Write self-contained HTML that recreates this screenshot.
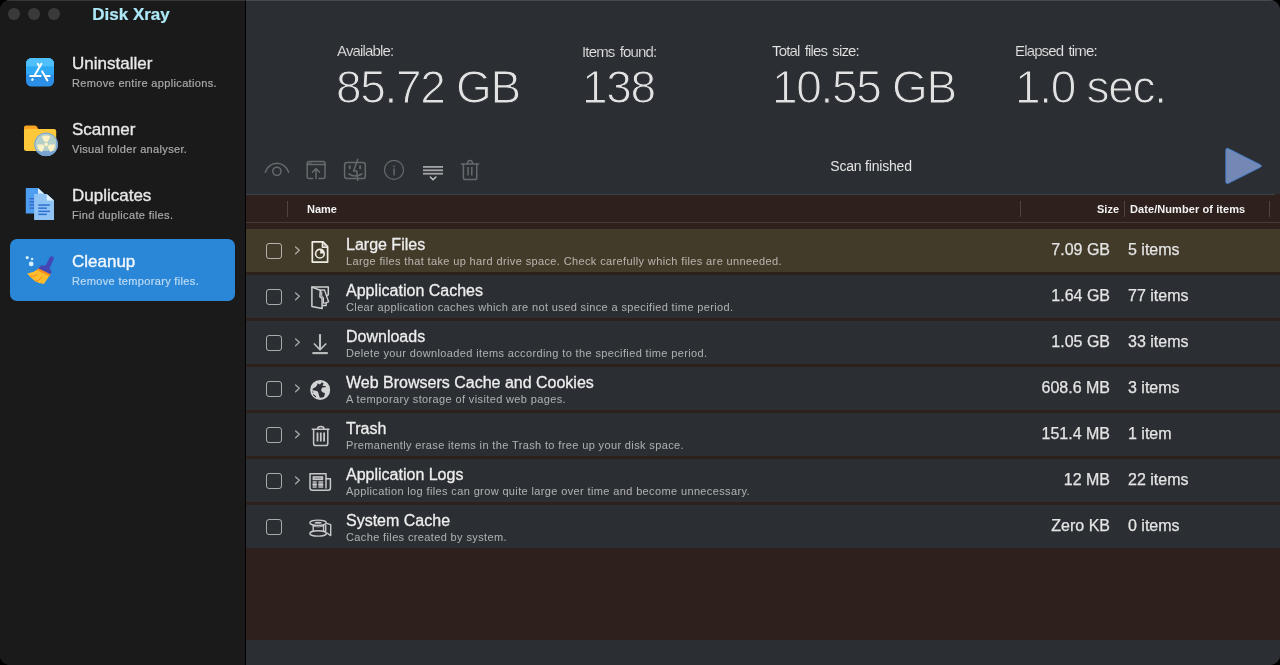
<!DOCTYPE html>
<html>
<head>
<meta charset="utf-8">
<title>Disk Xray</title>
<style>
*{box-sizing:border-box;margin:0;padding:0}
html,body{width:1280px;height:665px;overflow:hidden;background:#000;}
body{font-family:"Liberation Sans",sans-serif;position:relative;color:#e6e6e6;-webkit-font-smoothing:antialiased}
#win{will-change:transform;position:absolute;left:0;top:0;width:1280px;height:665px;border-radius:10px;overflow:hidden;background:#2b2f33}
#side{position:absolute;left:0;top:0;width:245px;height:665px;background:#1a1a1a}
#sep{position:absolute;left:245px;top:0;width:1px;height:665px;background:#000}
#topline{position:absolute;left:0;top:0;width:1280px;height:1px;background:rgba(255,255,255,0.13)}
.tl{position:absolute;top:8px;width:12px;height:12px;border-radius:50%;background:#3a3a3a}
#title{position:absolute;left:1px;top:4px;width:260px;text-align:center;font-weight:bold;font-size:17px;line-height:22px;color:#ade8f7;letter-spacing:0;-webkit-text-stroke:0.2px #ade8f7}
.item{position:absolute;left:10px;width:225px;height:62px;border-radius:7px}
.item.sel{background:#2a87d8}
.item .t{position:absolute;left:62px;top:13px;font-size:17px;line-height:20px;color:#e8e8e8;white-space:nowrap;-webkit-text-stroke:0.35px #e8e8e8}
.item .s{position:absolute;left:62px;top:35px;font-size:11px;line-height:14px;color:#a9a9a9;white-space:nowrap;letter-spacing:0.34px;-webkit-text-stroke:0.2px #a9a9a9}
.item.sel .t{color:#f3f8fd;-webkit-text-stroke-color:#f3f8fd}
.item.sel .s{color:#bddaf3;-webkit-text-stroke-color:#bddaf3}
.item svg{position:absolute}
#main{position:absolute;left:246px;top:0;width:1034px;height:665px;background:#2b2f33}
.lab{position:absolute;top:42px;font-size:15px;line-height:18px;color:#e4e4e4;white-space:nowrap;letter-spacing:-0.85px;word-spacing:1.9px;-webkit-text-stroke:0.15px #2b2f33}
.big{position:absolute;top:61px;font-size:46px;line-height:52px;color:#e2e2e2;white-space:nowrap;-webkit-text-stroke:1.1px #2b2f33;letter-spacing:-1.3px}
#status{position:absolute;left:771px;top:158px;width:200px;text-align:center;font-size:14px;line-height:16px;color:#e4e4e4;letter-spacing:-0.2px}
#tbl{position:absolute;left:246px;top:194px;width:1034px;height:446px;background:#2e201d}
#tbl .hl{position:absolute;left:0;top:0;width:1029px;height:1px;background:#3b4247}
#tbl .hb{position:absolute;left:0;top:28px;width:1034px;height:1px;background:#4a3b38}
.cd{position:absolute;top:7px;width:1px;height:16px;background:#54443f}
.th{position:absolute;top:8px;font-size:11px;line-height:14px;font-weight:bold;color:#f2f2f2;white-space:nowrap}
.row{position:absolute;left:0;width:1034px;height:43px;background:#2b2f33}
.row.sel{background:#433b2a}
.cb{position:absolute;left:20px;top:14px;width:16px;height:16px;border:1px solid rgba(255,255,255,0.6);border-radius:3px}
.row .n{position:absolute;left:100px;top:6px;font-size:16px;line-height:19px;color:#ededed;white-space:nowrap;-webkit-text-stroke:0.3px #ededed}
.row .d{position:absolute;left:100px;top:26px;font-size:11px;line-height:13px;color:rgba(255,255,255,0.61);white-space:nowrap;letter-spacing:0.37px}
.row .z{position:absolute;right:170px;top:11px;font-size:16px;line-height:20px;color:#e4e4e4;white-space:nowrap;text-align:right;-webkit-text-stroke:0.25px #e4e4e4}
.row .c{position:absolute;left:882px;top:11px;font-size:16px;line-height:20px;color:#e4e4e4;white-space:nowrap;-webkit-text-stroke:0.25px #e4e4e4}
.row svg{position:absolute}
</style>
</head>
<body>
<div id="win">
<div id="side"></div>
<div id="main"></div>
<div id="sep"></div>
<div id="topline"></div>
<div class="tl" style="left:8px"></div><div class="tl" style="left:28px"></div><div class="tl" style="left:48px"></div>
<div id="title">Disk Xray</div>

<!-- SIDEBAR ITEMS -->
<div class="item" style="top:41px"><svg style="left:16px;top:17px" width="28" height="29" viewBox="0 0 28 29"><defs><clipPath id="ua"><rect x="0" y="0" width="28" height="28.6" rx="5.6"/></clipPath></defs><g clip-path="url(#ua)"><rect width="28" height="29" fill="#2b8fe6"/><rect width="28" height="16.5" fill="#2fa9f6"/><rect width="28" height="8.3" fill="#4fc0fb"/></g><g stroke="#fff" stroke-width="2" stroke-linecap="round" fill="none"><path d="M15.4 5.8 L8.6 17.6"/><path d="M11.8 5.8 L13.6 9"/><path d="M16.2 13.4 L21.4 22.4"/><path d="M4.2 17.9 H14.6"/><path d="M19 17.9 H23.6"/><path d="M6.2 21.9 L6.7 21.2"/></g></svg><div class="t">Uninstaller</div><div class="s">Remove entire applications.</div></div>
<div class="item" style="top:107px"><svg style="left:13px;top:17px" width="36" height="40" viewBox="0 0 36 40"><path d="M1 3.6 Q1 1.5 3.1 1.5 H11.6 Q12.7 1.5 13.4 2.3 L15.6 5.2 V7 H1 Z" fill="#fba422"/><rect x="1" y="5.1" width="32.2" height="21.9" rx="2.2" fill="#fdc93a"/><defs><clipPath id="sc"><circle cx="23.1" cy="20.4" r="11.7"/></clipPath></defs><circle cx="23.1" cy="20.4" r="11.7" fill="#b3cfc8"/><g clip-path="url(#sc)"><rect x="10" y="27" width="30" height="8" fill="#7aa2d2"/><rect x="33.2" y="8" width="4" height="30" fill="#7aa2d2"/></g><circle cx="23.1" cy="20.4" r="11.4" fill="none" stroke="#6f9ad0" stroke-width="0.9"/><g fill="#fdf2c6" transform="translate(23.1 20.4)"><circle r="1.8"/><path d="M-1.45 -2.51 L-4.4 -7.62 A8.8 8.8 0 0 1 4.4 -7.62 L1.45 -2.51 A2.9 2.9 0 0 0 -1.45 -2.51Z"/><path d="M-1.45 -2.51 L-4.4 -7.62 A8.8 8.8 0 0 1 4.4 -7.62 L1.45 -2.51 A2.9 2.9 0 0 0 -1.45 -2.51Z" transform="rotate(120)"/><path d="M-1.45 -2.51 L-4.4 -7.62 A8.8 8.8 0 0 1 4.4 -7.62 L1.45 -2.51 A2.9 2.9 0 0 0 -1.45 -2.51Z" transform="rotate(240)"/></g></svg><div class="t">Scanner</div><div class="s">Visual folder analyser.</div></div>
<div class="item" style="top:173px"><svg style="left:15px;top:14px" width="30" height="34" viewBox="0 0 30 34"><path d="M0.8 1 H13 L19.3 6.7 V26.6 H0.8Z" fill="#4d9ef0"/><path d="M13 1 L19.3 6.7 H13Z" fill="#d9efff"/><g fill="#3d69c4"><rect x="4.4" y="11" width="6" height="1.4"/><rect x="4.4" y="14.1" width="6" height="1.4"/><rect x="4.4" y="17.3" width="6" height="1.4"/><rect x="4.4" y="20.4" width="6" height="1.4"/></g><path d="M9.1 7.1 H21.8 L29 13.6 V32.9 H9.1Z" fill="#90c4f5"/><path d="M21.8 7.1 L29 13.6 H21.8Z" fill="#dcf0ff"/><g fill="#2f6fce"><rect x="13.3" y="17.3" width="11.6" height="1.5"/><rect x="13.3" y="20.4" width="8.5" height="1.5"/><rect x="13.3" y="23.6" width="11.6" height="1.5"/><rect x="13.3" y="26.6" width="8.5" height="1.5"/></g></svg><div class="t">Duplicates</div><div class="s">Find duplicate files.</div></div>
<div class="item sel" style="top:239px"><svg style="left:15px;top:14px" width="32" height="34" viewBox="0 0 32 34"><g fill="#d2efff"><circle cx="2.2" cy="4.6" r="1.6"/><circle cx="7.1" cy="6" r="1.2"/><circle cx="6.2" cy="10.9" r="2.4"/></g><path d="M12.6 16.4 L24.8 22.3 L18.9 31.1 Q10 30.5 2.2 20.4 Q8 19.8 12.6 16.4Z" fill="#fdbd2c"/><path d="M5.2 23.5 Q9.5 23.6 12.2 21.4 M10.2 28.3 Q14.6 27.6 17 24.4" stroke="#f58c1e" stroke-width="1" fill="none" stroke-linecap="round"/><path d="M13.5 14.8 L25.8 20.8 L24.5 23.2 L12.2 17.2Z" fill="#f58c1e"/><path d="M27.6 3.5 Q29.4 4.3 28.8 6 L24.4 15.5 Q27 17 26.4 19.4 L25.6 21.3 L13.3 15.3 Q15.2 12 18.2 12.2 Q19.5 12.4 20.3 13.1 L24.8 4.3 Q25.7 2.7 27.6 3.5Z" fill="#4546b6"/></svg><div class="t">Cleanup</div><div class="s">Remove temporary files.</div></div>

<!-- STATS -->
<div class="lab" style="left:337px">Available:</div>
<div class="big" style="left:336px">85.72 GB</div>
<div class="lab" style="left:582px;top:43px">Items found:</div>
<div class="big" style="left:582px">138</div>
<div class="lab" style="left:772px">Total files size:</div>
<div class="big" style="left:772px">10.55 GB</div>
<div class="lab" style="left:1015px">Elapsed time:</div>
<div class="big" style="left:1015px">1.0 sec.</div>

<!-- TOOLBAR -->
<svg style="position:absolute;left:256px;top:150px" width="240" height="40" viewBox="256 150 240 40" fill="none">
<g stroke="#67696d" stroke-width="1.5" stroke-linecap="round" stroke-linejoin="round">
<path d="M265.3 172.2 A12.1 12.1 0 0 1 288.6 172.2"/><circle cx="276.9" cy="171.3" r="4.1"/>
<path d="M312.6 178.5 H309.2 Q307.2 178.5 307.2 176.5 V163.6 Q307.2 161.6 309.2 161.6 H323 Q325 161.6 325 163.6 V176.5 Q325 178.5 323 178.5 H319"/><path d="M307.2 164.4 H325"/><path d="M316 178.6 V168.6 M312.4 172.2 L316 168.5 L319.6 172.2"/>
<rect x="344.6" y="162.6" width="20.7" height="16" rx="2.4"/><path d="M349.7 166.2 V168.2 M360.1 166.2 V168.2" stroke-width="1.9"/><path d="M348.9 174 Q355.3 178 361.8 174"/><path d="M357.8 159.3 L353.6 171.1 H356.7 L357.8 180.4"/>
<circle cx="394" cy="169.9" r="9.5" stroke-width="1.2"/>
<path d="M461.3 164 H478.7 M467.5 163.8 Q467.5 160.6 470 160.6 Q472.5 160.6 472.5 163.8"/><path d="M463.4 164.2 V177.4 Q463.4 179.6 465.6 179.6 H474.6 Q476.8 179.6 476.8 177.4 V164.2"/><path d="M468.1 167.1 V175.6 M471.8 167.1 V175.6" stroke-width="1.5" stroke-linecap="butt"/>
</g>
<g fill="#66696d"><rect x="308.6" y="162.4" width="1.2" height="1.3"/><rect x="310.5" y="162.4" width="1.2" height="1.3"/><rect x="393.3" y="165.6" width="1.5" height="1.6"/><rect x="393.3" y="168.4" width="1.5" height="7"/></g>
<g fill="#a2a4a6"><rect x="423" y="166" width="20" height="1.8"/><rect x="423" y="169.4" width="20" height="1.8"/><rect x="423" y="172.8" width="20" height="1.8"/></g>
<path d="M430.3 177 L433.1 179.7 L435.9 177" stroke="#c2c3c4" stroke-width="1.5" stroke-linecap="round" stroke-linejoin="round"/>
</svg>
<svg style="position:absolute;left:1220px;top:144px" width="46" height="44" viewBox="1220 144 46 44"><path d="M1225.8 150.6 Q1225.8 147.2 1228.8 148.8 L1260.4 164.8 Q1262.6 166 1260.4 167.2 L1228.8 183.1 Q1225.8 184.7 1225.8 181.3Z" fill="#7388b4" stroke="#3f84d8" stroke-width="0.8" stroke-linejoin="round"/></svg>

<div id="status">Scan finished</div>

<!-- TABLE -->
<div id="tbl">
<div class="hl"></div><div class="hb"></div>
<div class="cd" style="left:41px"></div><div class="cd" style="left:774px"></div><div class="cd" style="left:878px"></div><div class="cd" style="left:1023px"></div>
<div class="th" style="left:61px">Name</div>
<div class="th" style="right:161px">Size</div>
<div class="th" style="left:884px;letter-spacing:0.08px">Date/Number of items</div>

<div class="row sel" style="top:35px"><div class="cb"></div><svg style="left:48px;top:17px" width="8" height="10" viewBox="0 0 8 10" fill="none"><path d="M1.6 0.9 L5.3 4.3 L1.6 7.7" stroke="rgba(255,255,255,0.58)" stroke-width="1.3" stroke-linecap="round" stroke-linejoin="round"/></svg><svg style="left:62px;top:9px" width="24" height="28" viewBox="308 238 24 28" fill="none"><g stroke="#efece6" stroke-width="1.7" stroke-linejoin="round"><path d="M312.3 241.8 H323 L327.6 246.6 V262.1 H312.3Z"/><path d="M322.4 242 V247.2 H327.4" stroke-width="1.4"/><circle cx="319.9" cy="253.7" r="4.3" stroke-width="1.6"/></g><path d="M320.2 253.4 V249.6 A3.8 3.8 0 0 1 324 253.4Z" fill="#efece6"/><path d="M323.2 242.6 L326.8 246.4 H323.2Z" fill="#efece6" opacity="0.55"/></svg><div class="n">Large Files</div><div class="d">Large files that take up hard drive space. Check carefully which files are unneeded.</div><div class="z">7.09 GB</div><div class="c">5 items</div></div>
<div class="row" style="top:81px"><div class="cb"></div><svg style="left:48px;top:17px" width="8" height="10" viewBox="0 0 8 10" fill="none"><path d="M1.6 0.9 L5.3 4.3 L1.6 7.7" stroke="rgba(255,255,255,0.58)" stroke-width="1.3" stroke-linecap="round" stroke-linejoin="round"/></svg><svg style="left:62px;top:9px" width="24" height="28" viewBox="308 284 24 28" fill="none"><g stroke="#cfd0d1" stroke-width="1.5" stroke-linejoin="round" stroke-linecap="round"><path d="M311.9 287.1 H328.3 V294.8 L326.5 295.9"/><path d="M311.9 287.1 V306.5 L322.1 308.6 V298.5 L319.9 296.7 L320.3 290.2 Z"/><path d="M320.3 290.2 L324.5 290 L328.6 301.7 L326.2 302.9 V305.5 H322.8" stroke-width="1.3"/><path d="M321.7 291.8 V296.2 L323.5 297.8 V303.3 L326 302.9" stroke-width="1.1"/></g></svg><div class="n">Application Caches</div><div class="d">Clear application caches which are not used since a specified time period.</div><div class="z">1.64 GB</div><div class="c">77 items</div></div>
<div class="row" style="top:127px"><div class="cb"></div><svg style="left:48px;top:17px" width="8" height="10" viewBox="0 0 8 10" fill="none"><path d="M1.6 0.9 L5.3 4.3 L1.6 7.7" stroke="rgba(255,255,255,0.58)" stroke-width="1.3" stroke-linecap="round" stroke-linejoin="round"/></svg><svg style="left:62px;top:9px" width="24" height="28" viewBox="308 330 24 28" fill="none"><g stroke="#bfc0c1"><path d="M320 334.1 V349.6" stroke-width="2.1"/><path d="M314.4 344 L320 349.8 L325.8 344" stroke-width="1.7" stroke-linecap="round" stroke-linejoin="miter"/><path d="M312.4 353.1 H327.8" stroke-width="2.1"/></g></svg><div class="n">Downloads</div><div class="d">Delete your downloaded items according to the specified time period.</div><div class="z">1.05 GB</div><div class="c">33 items</div></div>
<div class="row" style="top:173px"><div class="cb"></div><svg style="left:48px;top:17px" width="8" height="10" viewBox="0 0 8 10" fill="none"><path d="M1.6 0.9 L5.3 4.3 L1.6 7.7" stroke="rgba(255,255,255,0.58)" stroke-width="1.3" stroke-linecap="round" stroke-linejoin="round"/></svg><svg style="left:62px;top:9px" width="24" height="28" viewBox="308 376 24 28" fill="none"><circle cx="320.2" cy="389.9" r="10" fill="#d2d3d4"/><path d="M317.5 383.3 L319.9 384.5 L322 382.3 L323.5 383.3 L322.6 385.7 L325.9 386.3 L325.6 387.2 L322.3 387.5 Q320.6 389.6 321.4 391 Q322 392.3 325 393.3 L324.1 396.8 Q321.8 398 319.7 397.6 L318.7 394.2 Q318.4 391.5 316.9 391.1 L313 390.2 L312.3 389 L315.7 386.9 L317.2 385.1Z" fill="#2b2f33"/><path d="M313.6 394.8 L315.6 396.6" stroke="#2b2f33" stroke-width="1.1" stroke-linecap="round"/><path d="M312.6 391.6 L312.9 392.8" stroke="#2b2f33" stroke-width="0.6" stroke-linecap="round"/></svg><div class="n">Web Browsers Cache and Cookies</div><div class="d">A temporary storage of visited web pages.</div><div class="z">608.6 MB</div><div class="c">3 items</div></div>
<div class="row" style="top:219px"><div class="cb"></div><svg style="left:48px;top:17px" width="8" height="10" viewBox="0 0 8 10" fill="none"><path d="M1.6 0.9 L5.3 4.3 L1.6 7.7" stroke="rgba(255,255,255,0.58)" stroke-width="1.3" stroke-linecap="round" stroke-linejoin="round"/></svg><svg style="left:62px;top:9px" width="24" height="28" viewBox="308 422 24 28" fill="none"><g stroke="#c5c6c7" stroke-width="1.5" stroke-linecap="round" stroke-linejoin="round"><path d="M312.3 429.3 H329"/><path d="M317.6 429 Q317.6 426.6 320.8 426.6 Q324 426.6 324 429"/><path d="M313.6 429.6 V443.4 Q313.6 445.6 315.8 445.6 H325.6 Q327.8 445.6 327.8 443.4 V429.6"/><path d="M317.5 432.6 V441.6 M320.8 432.6 V441.6 M324.1 432.6 V441.6" stroke-width="1.8" stroke-linecap="butt"/></g></svg><div class="n">Trash</div><div class="d">Premanently erase items in the Trash to free up your disk space.</div><div class="z">151.4 MB</div><div class="c">1 item</div></div>
<div class="row" style="top:265px"><div class="cb"></div><svg style="left:48px;top:17px" width="8" height="10" viewBox="0 0 8 10" fill="none"><path d="M1.6 0.9 L5.3 4.3 L1.6 7.7" stroke="rgba(255,255,255,0.58)" stroke-width="1.3" stroke-linecap="round" stroke-linejoin="round"/></svg><svg style="left:60px;top:9px" width="28" height="28" viewBox="306 468 28 28" fill="none"><g stroke="#c6c7c8" stroke-width="1.5" stroke-linejoin="round"><path d="M326 473.8 H310 V488 Q310 490.2 312.4 490.2 H328.2 Q330.4 490.2 330.4 488 V478.8 H326 Z"/><path d="M326 478.8 V488.4"/></g><rect x="312.6" y="476.2" width="10.6" height="3.9" fill="#c6c7c8"/><rect x="314.4" y="477.5" width="7" height="1.3" fill="#8b8d8f"/><rect x="312.6" y="480.9" width="4.1" height="7.1" fill="#9a9c9e"/><rect x="318.4" y="480.9" width="4.8" height="7.1" fill="#9a9c9e"/><rect x="312.6" y="484" width="4.1" height="1.2" fill="#cfd0d1"/><rect x="318.4" y="484" width="4.8" height="1.2" fill="#cfd0d1"/></svg><div class="n">Application Logs</div><div class="d">Application log files can grow quite large over time and become unnecessary.</div><div class="z">12 MB</div><div class="c">22 items</div></div>
<div class="row" style="top:311px"><div class="cb"></div><svg style="left:60px;top:9px" width="28" height="28" viewBox="306 514 28 28" fill="none"><g stroke="#c6c7c8" stroke-width="1.4" stroke-linejoin="round" stroke-linecap="round"><ellipse cx="318.1" cy="522.8" rx="8.3" ry="2.7"/><ellipse cx="318.1" cy="533.4" rx="8.3" ry="2.7"/><path d="M313.2 525 V531.4 M323.6 525 V531.4"/><path d="M313.2 526.3 Q318.4 527.7 323.6 526.3" stroke-width="1" opacity="0.75"/><path d="M326.4 523.4 L330.7 524.6 V535.6 L327.4 533.2"/><path d="M325.7 525.4 V531.6"/></g><ellipse cx="318.1" cy="522.7" rx="3.6" ry="1" fill="#c6c7c8"/></svg><div class="n">System Cache</div><div class="d">Cache files created by system.</div><div class="z">Zero KB</div><div class="c">0 items</div></div>
</div>

</div>
</body>
</html>
